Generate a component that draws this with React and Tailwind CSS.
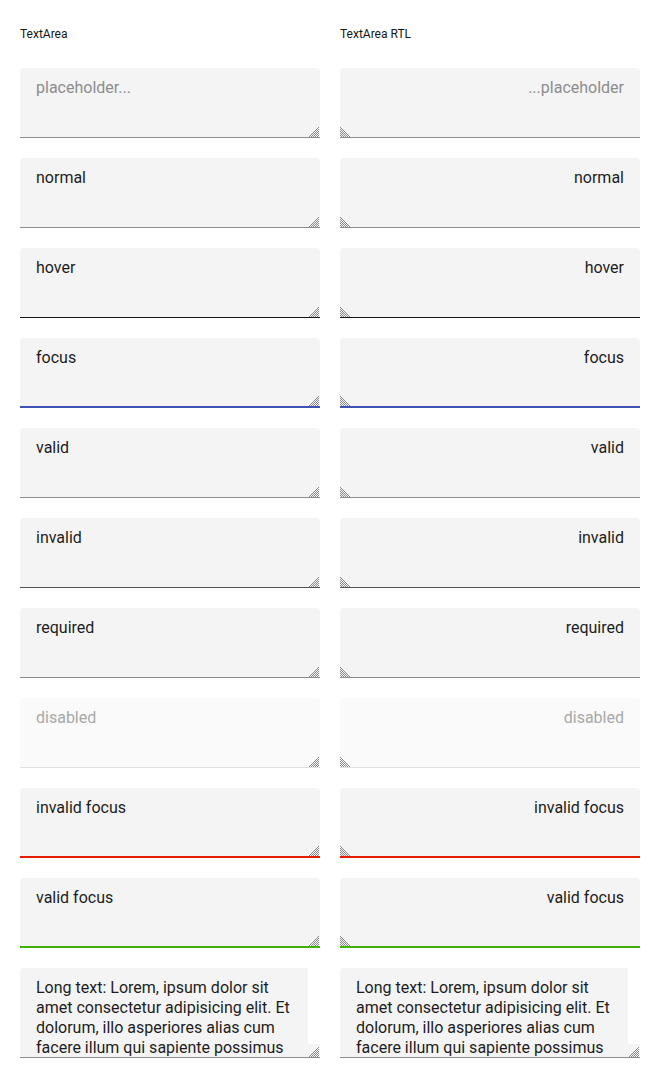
import { useState } from 'react';

const rows = [
  { label: 'placeholder...', value: '', placeholder: true, state: 'normal' },
  { label: 'normal', value: 'normal', state: 'normal' },
  { label: 'hover', value: 'hover', state: 'hover' },
  { label: 'focus', value: 'focus', state: 'focus' },
  { label: 'valid', value: 'valid', state: 'normal' },
  { label: 'invalid', value: 'invalid', state: 'invalid' },
  { label: 'required', value: 'required', state: 'normal' },
  { label: 'disabled', value: 'disabled', state: 'disabled' },
  { label: 'invalid focus', value: 'invalid focus', state: 'invalidFocus' },
  { label: 'valid focus', value: 'valid focus', state: 'validFocus' },
];

const longText =
  'Long text: Lorem, ipsum dolor sit amet consectetur adipisicing elit. Et dolorum, illo asperiores alias cum facere illum qui sapiente possimus nostrum, quibusdam fugit neque minima corporis repellat dolore dolorem.';

const base =
  'block w-full resize-none overflow-hidden rounded-t-[4px] border-0 bg-[#f4f4f4] px-4 pt-[10px] text-base leading-5 text-[#1d1d1d] outline-none placeholder:text-[#8d8d8d]';

const borders = {
  normal: 'h-[70px] border-b border-[#8d8d8d]',
  hover: 'h-[70px] border-b border-[#161616]',
  focus: 'h-[70px] border-b-2 border-[#3f51b5]',
  invalid: 'h-[70px] border-b border-[#525252]',
  disabled: 'h-[70px] border-b border-[#e0e0e0] !bg-[#fafafa] !text-[#a8a8a8]',
  invalidFocus: 'h-[70px] border-b-2 border-[#e51c00]',
  validFocus: 'h-[70px] border-b-2 border-[#3cb300]',
};

// hatched resize grip, drawn since the native one differs
function Grip({ rtl, bottom }) {
  return (
    <svg
      width="11"
      height="11"
      viewBox="0 0 11 11"
      shapeRendering="crispEdges"
      className={`pointer-events-none absolute ${bottom} ${rtl ? 'left-0 -scale-x-100' : 'right-[1px]'}`}
    >
      {[1, 3, 5, 7, 9].map((o) => (
        <line key={o} x1={o} y1="11" x2="11" y2={o} stroke="#8a8a8a" strokeWidth="1" />
      ))}
    </svg>
  );
}

function Field({ row, dir }) {
  const [value, setValue] = useState(row.value);
  const thick = ['focus', 'invalidFocus', 'validFocus'].includes(row.state);
  return (
    <div className="relative">
      <textarea
        dir={dir}
        value={value}
        onChange={(e) => setValue(e.target.value)}
        placeholder={row.placeholder ? row.label : undefined}
        disabled={row.state === 'disabled'}
        className={`${base} ${borders[row.state]}`}
      />
      <Grip rtl={dir === 'rtl'} bottom={thick ? 'bottom-[2px]' : 'bottom-[1px]'} />
    </div>
  );
}

function LongField() {
  const [text, setText] = useState(longText);
  return (
    <div className="relative">
      <textarea
        value={text}
        onChange={(e) => setText(e.target.value)}
        className={`${base} h-[90px] border-b border-[#8d8d8d] pr-7`}
      />
      {/* scrollbar track */}
      <div className="pointer-events-none absolute right-0 top-0 h-[76px] w-3 bg-white" />
      <Grip bottom="bottom-[1px]" />
    </div>
  );
}

function Column({ title, dir }) {
  return (
    <div className="flex flex-col">
      <div className="mb-[26px] mt-[6px] text-xs leading-4 text-[#161616]">{title}</div>
      <div className="flex flex-col gap-5">
        {rows.map((row) => (
          <Field key={row.label} row={row} dir={dir} />
        ))}
        <LongField />
      </div>
    </div>
  );
}

export default function App() {
  return (
    <div className="grid grid-cols-2 gap-5 bg-white p-5" style={{ fontFamily: 'Roboto, "Noto Sans", sans-serif' }}>
      <Column title="TextArea" dir="ltr" />
      <Column title="TextArea RTL" dir="rtl" />
    </div>
  );
}
